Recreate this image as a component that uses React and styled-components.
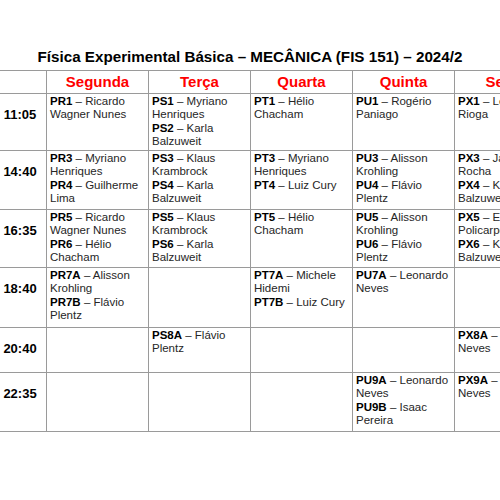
import styled, { createGlobalStyle } from "styled-components";

const GlobalStyle = createGlobalStyle`
  body {
    margin: 0;
    background: #ffffff;
    font-family: "Liberation Sans", Arial, sans-serif;
  }
`;

const days = ["Segunda", "Terça", "Quarta", "Quinta", "Sexta"];

const rows = [
  {
    time: "11:05",
    height: 57,
    cells: [
      [["PR1", "Ricardo Wagner Nunes"]],
      [["PS1", "Myriano Henriques"], ["PS2", "Karla Balzuweit"]],
      [["PT1", "Hélio Chacham"]],
      [["PU1", "Rogério Paniago"]],
      [["PX1", "Leonardo Rioga"]],
    ],
  },
  {
    time: "14:40",
    height: 59,
    cells: [
      [["PR3", "Myriano Henriques"], ["PR4", "Guilherme Lima"]],
      [["PS3", "Klaus Krambrock"], ["PS4", "Karla Balzuweit"]],
      [["PT3", "Myriano Henriques"], ["PT4", "Luiz Cury"]],
      [["PU3", "Alisson Krohling"], ["PU4", "Flávio Plentz"]],
      [["PX3", "Jaqueline Rocha"], ["PX4", "Karla Balzuweit"]],
    ],
  },
  {
    time: "16:35",
    height: 58,
    cells: [
      [["PR5", "Ricardo Wagner Nunes"], ["PR6", "Hélio Chacham"]],
      [["PS5", "Klaus Krambrock"], ["PS6", "Karla Balzuweit"]],
      [["PT5", "Hélio Chacham"]],
      [["PU5", "Alisson Krohling"], ["PU6", "Flávio Plentz"]],
      [["PX5", "Edmar Policarpo"], ["PX6", "Karla Balzuweit"]],
    ],
  },
  {
    time: "18:40",
    height: 60,
    cells: [
      [["PR7A", "Alisson Krohling"], ["PR7B", "Flávio Plentz"]],
      [],
      [["PT7A", "Michele Hidemi"], ["PT7B", "Luiz Cury"]],
      [["PU7A", "Leonardo Neves"]],
      [],
    ],
  },
  {
    time: "20:40",
    height: 45,
    cells: [
      [],
      [["PS8A", "Flávio Plentz"]],
      [],
      [],
      [["PX8A", "Leonardo Neves"]],
    ],
  },
  {
    time: "22:35",
    height: 59,
    cells: [
      [],
      [],
      [],
      [["PU9A", "Leonardo Neves"], ["PU9B", "Isaac Pereira"]],
      [["PX9A", "Leonardo Neves"]],
    ],
  },
];

const App = () => {
  return (
    <>
      <GlobalStyle />
      <Page>
        <Title>Física Experimental Básica – MECÂNICA (FIS 151) – 2024/2</Title>
        <Schedule>
          <colgroup>
            <col style={{ width: "53px" }} />
            {days.map(d => (
              <col key={d} style={{ width: "102px" }} />
            ))}
          </colgroup>
          <thead>
            <Row $h={23}>
              <DayHead />
              {days.map(d => (
                <DayHead key={d}>{d}</DayHead>
              ))}
            </Row>
          </thead>
          <tbody>
            {rows.map(row => (
              <Row key={row.time} $h={row.height}>
                <TimeCell>{row.time}</TimeCell>
                {row.cells.map((entries, i) => (
                  <Cell key={i}>
                    {entries.map(([code, name]) => (
                      <Entry key={code}>
                        <Code>{code}</Code> – {name}
                      </Entry>
                    ))}
                  </Cell>
                ))}
              </Row>
            ))}
          </tbody>
        </Schedule>
      </Page>
    </>
  );
};

const Page = styled.div`
  width: 500px;
  height: 500px;
  overflow: hidden;
  background: #fff;
`;

const Title = styled.h1`
  margin: 0;
  padding-top: 47px;
  height: 23px;
  text-align: center;
  font-size: 15.2px;
  line-height: 20px;
  font-weight: 700;
  color: #000;
  white-space: nowrap;
`;

const Schedule = styled.table`
  margin-left: -7px;
  border-collapse: collapse;
  table-layout: fixed;
  width: 563px;
  font-size: 11.5px;
  line-height: 13.33px;
  color: #262626;
`;

const Row = styled.tr`
  height: ${p => p.$h}px;
`;

const DayHead = styled.th`
  border: 1px solid #9a9a9a;
  padding: 0;
  color: #ff0000;
  font-size: 15px;
  font-weight: 700;
  text-align: center;
  vertical-align: middle;
`;

const TimeCell = styled.td`
  border: 1px solid #9a9a9a;
  padding: 13px 0 0;
  font-size: 13px;
  line-height: 16px;
  font-weight: 700;
  color: #000;
  text-align: center;
  vertical-align: top;
`;

const Cell = styled.td`
  border: 1px solid #9a9a9a;
  padding: 1px 3px 0 3px;
  vertical-align: top;
`;

const Entry = styled.div`
  display: block;
`;

const Code = styled.b`
  font-weight: 700;
  color: #000;
`;

export default App;
